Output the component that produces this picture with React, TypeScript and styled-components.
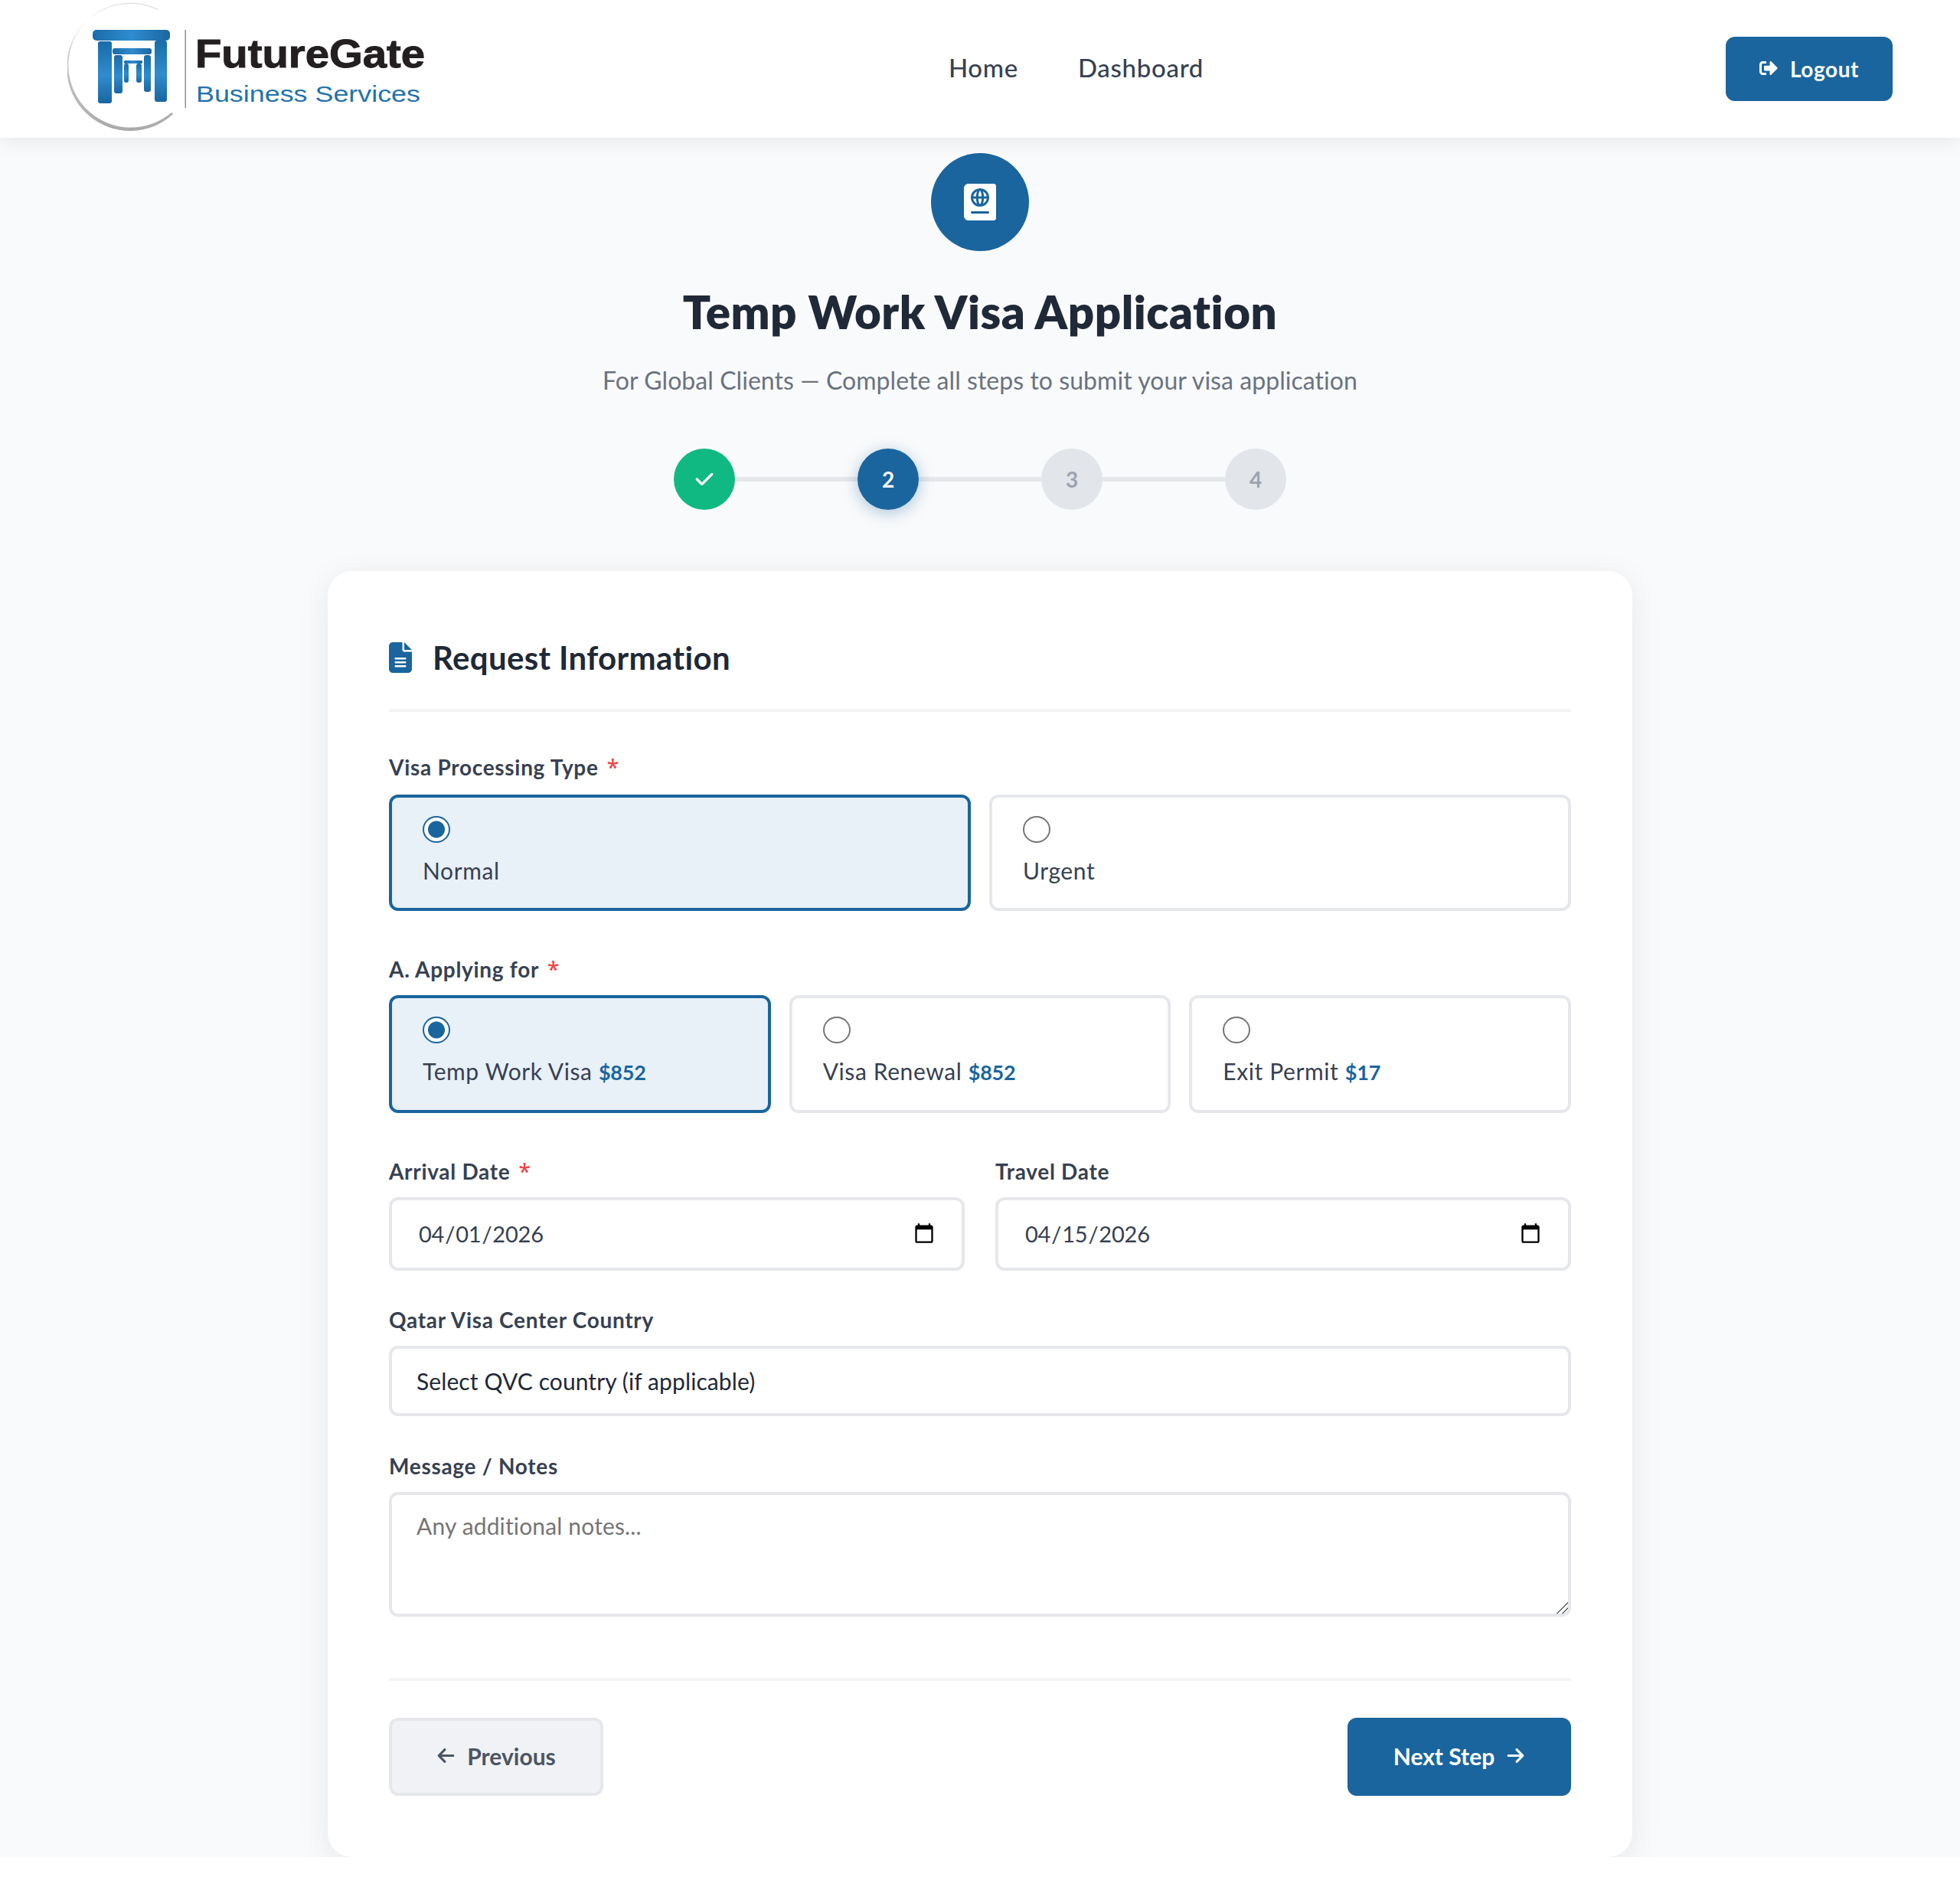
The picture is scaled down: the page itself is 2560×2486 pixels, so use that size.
import React from "react";
import styled, { createGlobalStyle } from "styled-components";
import { FaSignOutAlt, FaPassport } from "react-icons/fa";
import { FaArrowLeft, FaArrowRight, FaCheck, FaFileLines } from "react-icons/fa6";

const PRIMARY = "#1a659e";
const FONT = `Lato, "Noto Sans", sans-serif`;

const Global = createGlobalStyle`
  * { box-sizing: border-box; }
  html, body { margin: 0; padding: 0; background: #fff; }
  body { font-family: ${FONT}; color: #1f2937; }
`;

const Header = styled.header`
  position: relative;
  z-index: 2;
  height: 180px;
  background: #fff;
  display: flex;
  align-items: center;
  justify-content: space-between;
  padding: 0 88px;
  box-shadow: 0 4px 24px rgba(0, 0, 0, 0.08);
`;
const LogoSvg = styled.svg`
  width: 474px;
  height: 180px;
  display: block;
  flex: none;
`;
const Nav = styled.nav`
  display: flex;
  gap: 78px;
  padding-bottom: 5px;
  margin-right: 5px;
`;
const NavLink = styled.a`
  font-size: 33px;
  line-height: 48px;
  font-weight: 500;
  color: #374151;
  letter-spacing: 0.7px;
`;
const LogoutButton = styled.button`
  width: 218px;
  height: 84px;
  border: 0;
  border-radius: 12px;
  background: ${PRIMARY};
  color: #fff;
  font-family: ${FONT};
  font-size: 28px;
  font-weight: 700;
  display: flex;
  align-items: center;
  justify-content: center;
  gap: 16px;
  letter-spacing: 0.6px;
  svg { width: 24px; height: 24px; margin-top: -3px; }
`;

const Main = styled.main`
  background: #f9fafb;
  padding-top: 20px;
  height: 2246px;
  display: flex;
  flex-direction: column;
  align-items: center;
`;
const Badge = styled.div`
  width: 128px;
  height: 128px;
  border-radius: 50%;
  background: ${PRIMARY};
  color: #fff;
  display: flex;
  align-items: center;
  justify-content: center;
  svg { width: 42px; height: 48px; }
`;
const Title = styled.h1`
  margin: 39px 0 0;
  font-size: 60px;
  line-height: 80px;
  font-weight: 800;
  color: #1f2937;
  letter-spacing: 0.5px;
`;
const Subtitle = styled.p`
  margin: 26px 0 0;
  font-size: 32px;
  line-height: 48px;
  color: #6b7280;
  letter-spacing: 0.05px;
`;
const Stepper = styled.div`
  margin-top: 65px;
  display: flex;
  align-items: center;
`;
const Step = styled.div<{ $state: "done" | "active" | "todo" }>`
  width: 80px;
  height: 80px;
  border-radius: 50%;
  display: flex;
  align-items: center;
  justify-content: center;
  font-size: 28px;
  font-weight: 700;
  position: relative;
  z-index: 1;
  background: ${(p) =>
    p.$state === "done" ? "#10b981" : p.$state === "active" ? PRIMARY : "#e2e5ea"};
  color: ${(p) => (p.$state === "todo" ? "#9ca3af" : "#fff")};
  box-shadow: ${(p) => (p.$state === "active" ? "0 4px 20px rgba(26,101,158,0.35)" : "none")};
  svg { width: 26px; height: 26px; }
`;
const Connector = styled.div`
  width: 160px;
  height: 6px;
  background: #e5e7eb;
`;
const Card = styled.section`
  margin-top: 80px;
  width: 1704px;
  height: 1680px;
  flex: none;
  background: #fff;
  border-radius: 32px;
  padding: 80px;
  box-shadow: 0 8px 40px rgba(0, 0, 0, 0.08);
`;
const SectionHead = styled.div`
  display: flex;
  align-items: center;
  gap: 27px;
  height: 104px;
  padding-bottom: 34px;
  border-bottom: 4px solid #f3f4f6;
  color: ${PRIMARY};
  svg { width: 30px; height: 40px; }
`;
const SectionTitle = styled.h2`
  margin: 0;
  font-size: 42px;
  line-height: 66px;
  font-weight: 700;
  color: #1f2937;
  letter-spacing: 0.35px;
`;
const Field = styled.div<{ $top: number }>`
  margin-top: ${(p) => p.$top}px;
`;
const Label = styled.label<{ $gap?: number }>`
  display: block;
  font-size: 28px;
  line-height: 44px;
  font-weight: 700;
  color: #374151;
  margin-bottom: ${(p) => p.$gap ?? 12}px;
  letter-spacing: 0.7px;
`;
const Required = styled.span`
  color: #ef4444;
  margin-left: 11px;
  font-family: "Noto Sans", sans-serif;
  font-weight: 500;
`;
const RadioGrid = styled.div<{ $cols: number; $height: number }>`
  display: grid;
  grid-template-columns: repeat(${(p) => p.$cols}, 1fr);
  grid-auto-rows: ${(p) => p.$height}px;
  gap: 24px;
`;
const RadioCard = styled.label<{ $on?: boolean }>`
  display: flex;
  flex-direction: column;
  align-items: flex-start;
  gap: 11px;
  padding: 24px 40px;
  border: 4px solid ${(p) => (p.$on ? PRIMARY : "#e5e7eb")};
  border-radius: 12px;
  background: ${(p) => (p.$on ? "#e8f0f8" : "#fff")};
  font-size: 30px;
  line-height: 50px;
  color: #374151;
  letter-spacing: 0.6px;
`;
const Radio = styled.input`
  appearance: none;
  width: 36px;
  height: 36px;
  margin: 0;
  border-radius: 50%;
  border: 2px solid #767676;
  background: #fff;
  &:checked {
    border-color: ${PRIMARY};
    background: radial-gradient(circle, ${PRIMARY} 0 10.5px, #fff 11.5px);
  }
`;
const Price = styled.strong`
  color: ${PRIMARY};
  font-weight: 700;
  font-size: 27px;
  letter-spacing: -0.2px;
`;
const DateRow = styled.div`
  display: grid;
  grid-template-columns: 1fr 1fr;
  gap: 40px;
`;
const control = `
  display: block;
  width: 100%;
  border: 4px solid #e5e7eb;
  border-radius: 12px;
  background: #fff;
  font-family: ${FONT};
  font-size: 30px;
  color: #1f2937;
  outline: none;
`;
const DateInput = styled.input`
  ${control}
  height: 96px;
  padding: 0 34px 2px;
  color: #374151;
  font-size: 29px;
  letter-spacing: -0.2px;
  &::-webkit-calendar-picker-indicator { width: 30px; height: 30px; padding: 0; margin: 2px 0 0; }
`;
const Select = styled.select`
  ${control}
  height: 92px;
  padding: 0 32px;
  appearance: none;
  letter-spacing: 0.1px;
`;
const TextArea = styled.textarea`
  ${control}
  height: 163px;
  padding: 18px 32px;
  line-height: 44px;
  letter-spacing: 0.15px;
  &::placeholder { color: #757575; }
  &::-webkit-resizer {
    background: linear-gradient(
      135deg,
      transparent 0 48%,
      #666 48% 55%,
      transparent 55% 72%,
      #666 72% 79%,
      transparent 79%
    );
  }
`;
const Footer = styled.div`
  margin-top: 80px;
  padding-top: 48px;
  border-top: 4px solid #f3f4f6;
  display: flex;
  justify-content: space-between;
`;
const BackButton = styled.button`
  width: 280px;
  height: 102px;
  border: 4px solid #e5e7eb;
  border-radius: 12px;
  background: #f0f2f5;
  color: #4b5563;
  font-family: ${FONT};
  font-size: 30px;
  font-weight: 700;
  display: flex;
  align-items: center;
  justify-content: center;
  gap: 15px;
  padding: 0 0 3px;
  svg { width: 25px; height: 25px; }
`;
const NextButton = styled(BackButton)`
  width: 292px;
  border: 0;
  background: ${PRIMARY};
  color: #fff;
`;

const Logo = () => (
  <LogoSvg viewBox="0 0 474 180" aria-label="FutureGate Business Services">
    <defs>
      <linearGradient id="ring" x1="0" y1="0" x2="0" y2="1">
        <stop offset="0" stopColor="#e2e2e2" />
        <stop offset="1" stopColor="#a9a9a9" />
      </linearGradient>
      <linearGradient id="blueV" x1="0" y1="0" x2="0" y2="1">
        <stop offset="0" stopColor="#1a6ba8" />
        <stop offset="0.55" stopColor="#2f8ccf" />
        <stop offset="1" stopColor="#1a669f" />
      </linearGradient>
      <linearGradient id="blueH" x1="0" y1="0" x2="1" y2="0">
        <stop offset="0" stopColor="#1a6ba8" />
        <stop offset="0.5" stopColor="#2f8ccf" />
        <stop offset="1" stopColor="#1a669f" />
      </linearGradient>
    </defs>
    <path
      d="M118.3,13.3 A83,83 0 1 0 138.2,149.1 L136.2,146.7 A81.5,81.5 0 1 1 119,12 Z"
      fill="url(#ring)"
    />
    <rect x="33" y="39" width="101" height="14" rx="5" fill="url(#blueH)" />
    <rect x="40" y="54" width="18" height="81" rx="3" fill="url(#blueV)" />
    <rect x="114" y="53" width="16" height="80" rx="3" fill="url(#blueV)" />
    <rect x="59" y="63" width="51" height="8" rx="3" fill="url(#blueH)" />
    <rect x="61" y="72" width="11" height="50" rx="3" fill="url(#blueV)" />
    <rect x="100" y="72" width="9" height="48" rx="3" fill="url(#blueV)" />
    <rect x="74" y="79" width="24" height="4" rx="1.5" fill="url(#blueH)" />
    <rect x="74" y="83" width="6" height="25" rx="3" fill="url(#blueV)" />
    <rect x="90" y="83" width="7" height="25" rx="3" fill="url(#blueV)" />
    <rect x="153.5" y="39" width="1.5" height="102" fill="#8f8f8f" />
    <text
      x="167"
      y="88"
      fontFamily="'Liberation Sans', Arial, sans-serif"
      fontWeight="700"
      fontSize="52"
      fill="#231f20"
      stroke="#231f20"
      strokeWidth="1"
      textLength="300"
      lengthAdjust="spacingAndGlyphs"
    >
      FutureGate
    </text>
    <text
      x="168"
      y="133"
      fontFamily="'Liberation Sans', Arial, sans-serif"
      fontSize="29"
      fill="#2272ad"
      textLength="293"
      lengthAdjust="spacingAndGlyphs"
    >
      Business Services
    </text>
  </LogoSvg>
);

export default function App() {
  return (
    <>
      <Global />
      <Header>
        <Logo />
        <Nav>
          <NavLink>Home</NavLink>
          <NavLink>Dashboard</NavLink>
        </Nav>
        <LogoutButton>
          <FaSignOutAlt />
          Logout
        </LogoutButton>
      </Header>
      <Main>
        <Badge>
          <FaPassport />
        </Badge>
        <Title>Temp Work Visa Application</Title>
        <Subtitle>For Global Clients — Complete all steps to submit your visa application</Subtitle>
        <Stepper>
          <Step $state="done">
            <FaCheck />
          </Step>
          <Connector />
          <Step $state="active">2</Step>
          <Connector />
          <Step $state="todo">3</Step>
          <Connector />
          <Step $state="todo">4</Step>
        </Stepper>
        <Card>
          <SectionHead>
            <FaFileLines />
            <SectionTitle>Request Information</SectionTitle>
          </SectionHead>
          <Field $top={50}>
            <Label $gap={14}>
              Visa Processing Type<Required>*</Required>
            </Label>
            <RadioGrid $cols={2} $height={152}>
              <RadioCard $on>
                <Radio type="radio" name="ptype" defaultChecked />
                Normal
              </RadioCard>
              <RadioCard>
                <Radio type="radio" name="ptype" />
                Urgent
              </RadioCard>
            </RadioGrid>
          </Field>
          <Field $top={54}>
            <Label>
              A. Applying for<Required>*</Required>
            </Label>
            <RadioGrid $cols={3} $height={154}>
              <RadioCard $on>
                <Radio type="radio" name="apply" defaultChecked />
                <span>
                  Temp Work Visa <Price>$852</Price>
                </span>
              </RadioCard>
              <RadioCard>
                <Radio type="radio" name="apply" />
                <span>
                  Visa Renewal <Price>$852</Price>
                </span>
              </RadioCard>
              <RadioCard>
                <Radio type="radio" name="apply" />
                <span>
                  Exit Permit <Price>$17</Price>
                </span>
              </RadioCard>
            </RadioGrid>
          </Field>
          <Field $top={54}>
            <DateRow>
              <div>
                <Label>
                  Arrival Date<Required>*</Required>
                </Label>
                <DateInput type="date" defaultValue="2026-04-01" />
              </div>
              <div>
                <Label>Travel Date</Label>
                <DateInput type="date" defaultValue="2026-04-15" />
              </div>
            </DateRow>
          </Field>
          <Field $top={42}>
            <Label>Qatar Visa Center Country</Label>
            <Select defaultValue="">
              <option value="">Select QVC country (if applicable)</option>
            </Select>
          </Field>
          <Field $top={43}>
            <Label>Message / Notes</Label>
            <TextArea placeholder="Any additional notes..." />
          </Field>
          <Footer>
            <BackButton>
              <FaArrowLeft />
              Previous
            </BackButton>
            <NextButton>
              Next Step
              <FaArrowRight />
            </NextButton>
          </Footer>
        </Card>
      </Main>
    </>
  );
}
